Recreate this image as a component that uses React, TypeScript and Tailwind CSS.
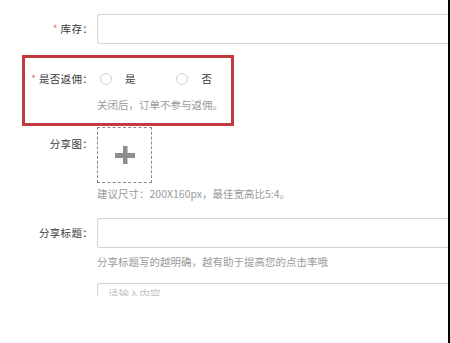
import React from "react";

const font = { fontFamily: '"Noto Sans CJK SC", "Microsoft YaHei", sans-serif' };

function Label({ text, required }: { text: string; required?: boolean }) {
  return (
    <div className="w-[93px] shrink-0 whitespace-nowrap text-right text-[10.5px] leading-[16px] text-[#3a3a3a]">
      {required && <span className="mr-[3px] text-[#e57a82]">*</span>}
      <span className="tracking-[0.3px]">{text}</span>
    </div>
  );
}

export default function App() {
  return (
    <div className="relative flex h-[343px] w-[450px] overflow-hidden bg-white" style={font}>
      <div className="flex-1">
        {/* 库存 */}
        <div className="mt-[14px] flex items-center gap-[4px]">
          <Label text="库存：" required />
          <div className="h-[30px] flex-1 rounded-l-[3px] border border-r-0 border-[#d4d4d4]" />
        </div>

        {/* 是否返佣 */}
        <div className="mt-[25px] flex h-[20px] items-center gap-[4px]">
          <Label text="是否返佣：" required />
          <div className="flex items-center text-[10.5px] text-[#3a3a3a]">
            <span className="ml-[3px] h-[12px] w-[12px] rounded-full border border-[#d0d0d0]" />
            <span className="ml-[13px]">是</span>
            <span className="ml-[40px] h-[12px] w-[12px] rounded-full border border-[#d0d0d0]" />
            <span className="ml-[14px]">否</span>
          </div>
        </div>
        <div className="ml-[97px] mt-[8px] text-[10.5px] leading-[16px] text-[#9a9a9a]">
          关闭后，订单不参与返佣。
        </div>

        {/* 分享图 */}
        <div className="mt-[14px] flex gap-[4px]">
          <div className="pt-[9px]">
            <Label text="分享图：" />
          </div>
          <div className="flex h-[56px] w-[55px] items-center justify-center border border-dashed border-[#8a8a8a]">
            <svg width="20" height="18" viewBox="0 0 20 18">
              <rect x="0" y="7" width="20" height="5" fill="#8e8e8e" />
              <rect x="8" y="0" width="4.5" height="18" fill="#8e8e8e" />
            </svg>
          </div>
        </div>
        <div className="ml-[97px] mt-[3px] text-[10.5px] leading-[16px] text-[#9a9a9a]">
          建议尺寸：200X160px，最佳宽高比5:4。
        </div>

        {/* 分享标题 */}
        <div className="mt-[16px] flex items-center gap-[4px]">
          <Label text="分享标题：" />
          <div className="h-[30px] flex-1 rounded-l-[3px] border border-r-0 border-[#d4d4d4]" />
        </div>
        <div className="ml-[97px] mt-[6px] text-[10.5px] leading-[16px] text-[#9a9a9a]">
          分享标题写的越明确，越有助于提高您的点击率哦
        </div>

        {/* 下一个输入框（被截断） */}
        <div className="ml-[97px] mt-[13px] h-[13px] overflow-hidden">
          <div className="flex h-[30px] items-start rounded-l-[3px] border border-r-0 border-[#d4d4d4] pl-[10px] pt-[3px] text-[10.5px] leading-[14px] text-[#c0c0c0]">
            请输入内容
          </div>
        </div>
      </div>
      <div className="h-[343px] w-[2px] shrink-0 bg-black" />

      {/* 标注红框 */}
      <div className="pointer-events-none absolute left-[22px] top-[55px] h-[71px] w-[212px] border-[3px] border-[#c33a40]" />
    </div>
  );
}
